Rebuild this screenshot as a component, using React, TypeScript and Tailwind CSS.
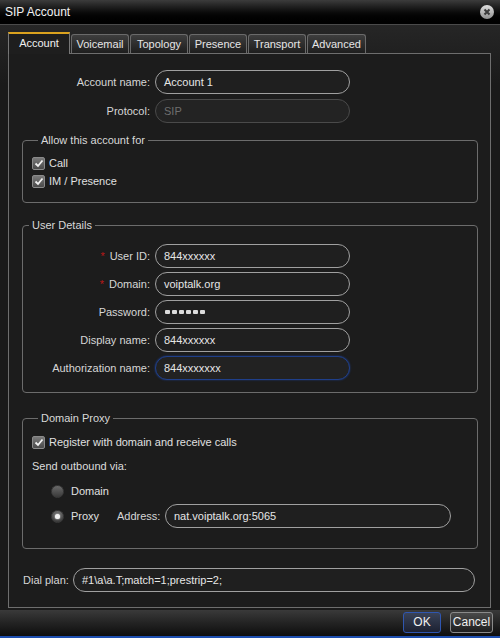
import type { ReactNode } from "react";

const FONT = { fontFamily: '"Liberation Sans", Arial, sans-serif' };

const TABS = ["Account", "Voicemail", "Topology", "Presence", "Transport", "Advanced"];
const TAB_W = [62, 59, 59, 59, 59, 60];

function Input({
  value,
  width,
  disabled,
  focus,
}: {
  value: string;
  width: number;
  disabled?: boolean;
  focus?: boolean;
}) {
  const tone = disabled
    ? "border-[#4a4a4a] text-[#6e6e6e] bg-[#232323]"
    : focus
      ? "border-[#1f3f8a] text-[#e6e6e6] bg-[#222222] shadow-[0_0_2px_#1f3f8a]"
      : "border-[#a0a0a0] text-[#e6e6e6] bg-[#1f1f1f]";
  return (
    <div
      className={`h-[24px] shrink-0 rounded-[12px] border flex items-center pl-[8px] text-[11px] ${tone}`}
      style={{ width }}
    >
      {value}
    </div>
  );
}

function Row({
  label,
  labelWidth,
  value,
  required,
  disabled,
  focus,
  password,
}: {
  label: string;
  labelWidth: number;
  value: string;
  required?: boolean;
  disabled?: boolean;
  focus?: boolean;
  password?: boolean;
}) {
  return (
    <div className="flex items-center h-[24px]">
      <div
        className="shrink-0 text-right pr-[5px] text-[11px] text-[#d6d6d6]"
        style={{ width: labelWidth }}
      >
        {required && <span className="text-[#b81818] mr-[5px]">*</span>}
        {label}
      </div>
      {password ? (
        <div className="h-[24px] w-[195px] rounded-[12px] border border-[#a0a0a0] bg-[#1f1f1f] flex items-center gap-[2px] pl-[9px]">
          {[0, 1, 2, 3, 4, 5].map((i) => (
            <span key={i} className="h-[4px] w-[5px] rounded-[1px] bg-[#dcdcdc]" />
          ))}
        </div>
      ) : (
        <Input value={value} width={195} disabled={disabled} focus={focus} />
      )}
    </div>
  );
}

function Check({ label }: { label: string }) {
  return (
    <div className="flex items-center h-[18px] gap-[4px]">
      <span className="h-[13px] w-[13px] rounded-[2px] border border-[#8a8a8a] bg-gradient-to-b from-[#7a7a7a] to-[#4a4a4a] flex items-center justify-center">
        <svg width="10" height="9" viewBox="0 0 10 9">
          <path d="M1.5 4.5 L4 7 L8.5 1.5" stroke="#f2f2f2" strokeWidth="1.8" fill="none" />
        </svg>
      </span>
      <span className="text-[11px] text-[#e0e0e0]">{label}</span>
    </div>
  );
}

function Radio({ on }: { on?: boolean }) {
  return (
    <span className="h-[13px] w-[13px] shrink-0 rounded-full border border-[#3a3a3a] bg-gradient-to-b from-[#6a6a6a] to-[#3a3a3a] flex items-center justify-center">
      {on && <span className="h-[5px] w-[5px] rounded-full bg-[#f0f0f0] shadow-[0_0_2px_#fff]" />}
    </span>
  );
}

function Group({ title, children, className }: { title: string; children: ReactNode; className?: string }) {
  return (
    <fieldset
      className={`mx-[13px] w-[456px] rounded-[4px] border border-[#6c6c6c] ${className ?? ""}`}
    >
      <legend className="ml-[6px] px-[3px] text-[11px] leading-[13px] text-[#d8d8d8]">{title}</legend>
      {children}
    </fieldset>
  );
}

export default function App() {
  return (
    <div
      className="relative w-[500px] h-[638px] overflow-hidden bg-[#1a1a1a] flex flex-col"
      style={FONT}
    >
      {/* title bar */}
      <div className="h-[25px] shrink-0 flex items-center justify-between pl-[5px] pr-[6px] bg-gradient-to-b from-[#3c3c3c] via-[#0c0c0c] to-[#000000] border-b border-[#4a4a4a]">
        <span className="text-[12px] text-[#f2f2f2]">SIP Account</span>
        <span className="h-[14px] w-[14px] rounded-full bg-gradient-to-b from-[#e0e0e0] to-[#909090] flex items-center justify-center">
          <svg width="8" height="8" viewBox="0 0 8 8">
            <path d="M1.5 1.5 L6.5 6.5 M6.5 1.5 L1.5 6.5" stroke="#3a3a3a" strokeWidth="2" />
          </svg>
        </span>
      </div>

      {/* body */}
      <div className="flex-1 bg-gradient-to-b from-[#262626] to-[#1a1a1a] to-[60px] pl-[8px] pt-[7px] flex flex-col">
        {/* tabs */}
        <div className="flex items-end h-[21px] relative z-10">
          {TABS.map((t, i) =>
            i === 0 ? (
              <div
                key={t}
                className="h-[22px] border-t-[2px] border-t-[#dba21e] border-l border-r border-l-[#777] border-r-[#777] bg-[#1e1e1e] flex items-center justify-center text-[11px] text-[#f0f0f0] mb-[-1px] pb-[1px]"
                style={{ width: TAB_W[i] }}
              >
                {t}
              </div>
            ) : (
              <div
                key={t}
                className="h-[19px] ml-[1px] rounded-t-[3px] border border-b-0 border-[#6a6a6a] bg-gradient-to-b from-[#3e3e3e] to-[#1e1e1e] flex items-center justify-center text-[11px] text-[#e6e6e6]"
                style={{ width: TAB_W[i] - 1 }}
              >
                {t}
              </div>
            ),
          )}
        </div>

        {/* panel */}
        <div className="w-[483px] h-[555px] border border-[#6e6e6e] bg-[#1c1c1c] flex flex-col">
          <div className="mt-[16px] flex flex-col gap-[5px]">
            <Row label="Account name:" labelWidth={146} value="Account 1" />
            <Row label="Protocol:" labelWidth={146} value="SIP" disabled />
          </div>

          <Group title="Allow this account for" className="mt-[11px] pl-[9px] pt-[7px] pb-[12px]">
            <Check label="Call" />
            <Check label="IM / Presence" />
          </Group>

          <Group title="User Details" className="mt-[16px] pt-[12px] pb-[12px]">
            <div className="flex flex-col gap-[4px]">
              <Row label="User ID:" labelWidth={132} value="844xxxxxx" required />
              <Row label="Domain:" labelWidth={132} value="voiptalk.org" required />
              <Row label="Password:" labelWidth={132} value="" password />
              <Row label="Display name:" labelWidth={132} value="844xxxxxx" />
              <Row label="Authorization name:" labelWidth={132} value="844xxxxxxx" focus />
            </div>
          </Group>

          <Group title="Domain Proxy" className="mt-[19px] pl-[9px] pt-[8px] pb-[20px]">
            <Check label="Register with domain and receive calls" />
            <div className="mt-[8px] text-[11px] text-[#dcdcdc] h-[14px] leading-[14px]">Send outbound via:</div>
            <div className="mt-[10px] ml-[19px] flex items-center h-[16px] gap-[7px]">
              <Radio />
              <span className="text-[11px] text-[#e0e0e0]">Domain</span>
            </div>
            <div className="mt-[5px] ml-[19px] flex items-center h-[24px]">
              <Radio on />
              <span className="ml-[7px] w-[46px] text-[11px] text-[#e0e0e0]">Proxy</span>
              <span className="text-[11px] text-[#d6d6d6] w-[48px]">Address:</span>
              <Input value="nat.voiptalk.org:5065" width={286} />
            </div>
          </Group>

          <div className="mt-[19px] flex items-center h-[24px] pl-[14px]">
            <span className="w-[50px] text-[11px] text-[#d6d6d6]">Dial plan:</span>
            <Input value={"#1\\a\\a.T;match=1;prestrip=2;"} width={402} />
          </div>
        </div>

        {/* bottom bar */}
        <div className="mt-[2px] ml-[-8px] flex-1 bg-gradient-to-b from-[#3a3a3a] to-[#0e0e0e] flex items-center justify-end gap-[9px] pr-[7px] pb-[2px]">
          <button className="h-[21px] w-[38px] rounded-[3px] border border-[#2f56b0] bg-gradient-to-b from-[#3a4358] to-[#1c2132] text-[12px] text-[#f0f0f0]">
            OK
          </button>
          <button className="h-[21px] w-[43px] rounded-[3px] border border-[#8a8a8a] bg-gradient-to-b from-[#4a4a4a] to-[#1e1e1e] text-[12px] text-[#f0f0f0]">
            Cancel
          </button>
        </div>
        <div className="ml-[-8px] h-[2px] bg-[#1e4fb0]" />
      </div>
    </div>
  );
}
